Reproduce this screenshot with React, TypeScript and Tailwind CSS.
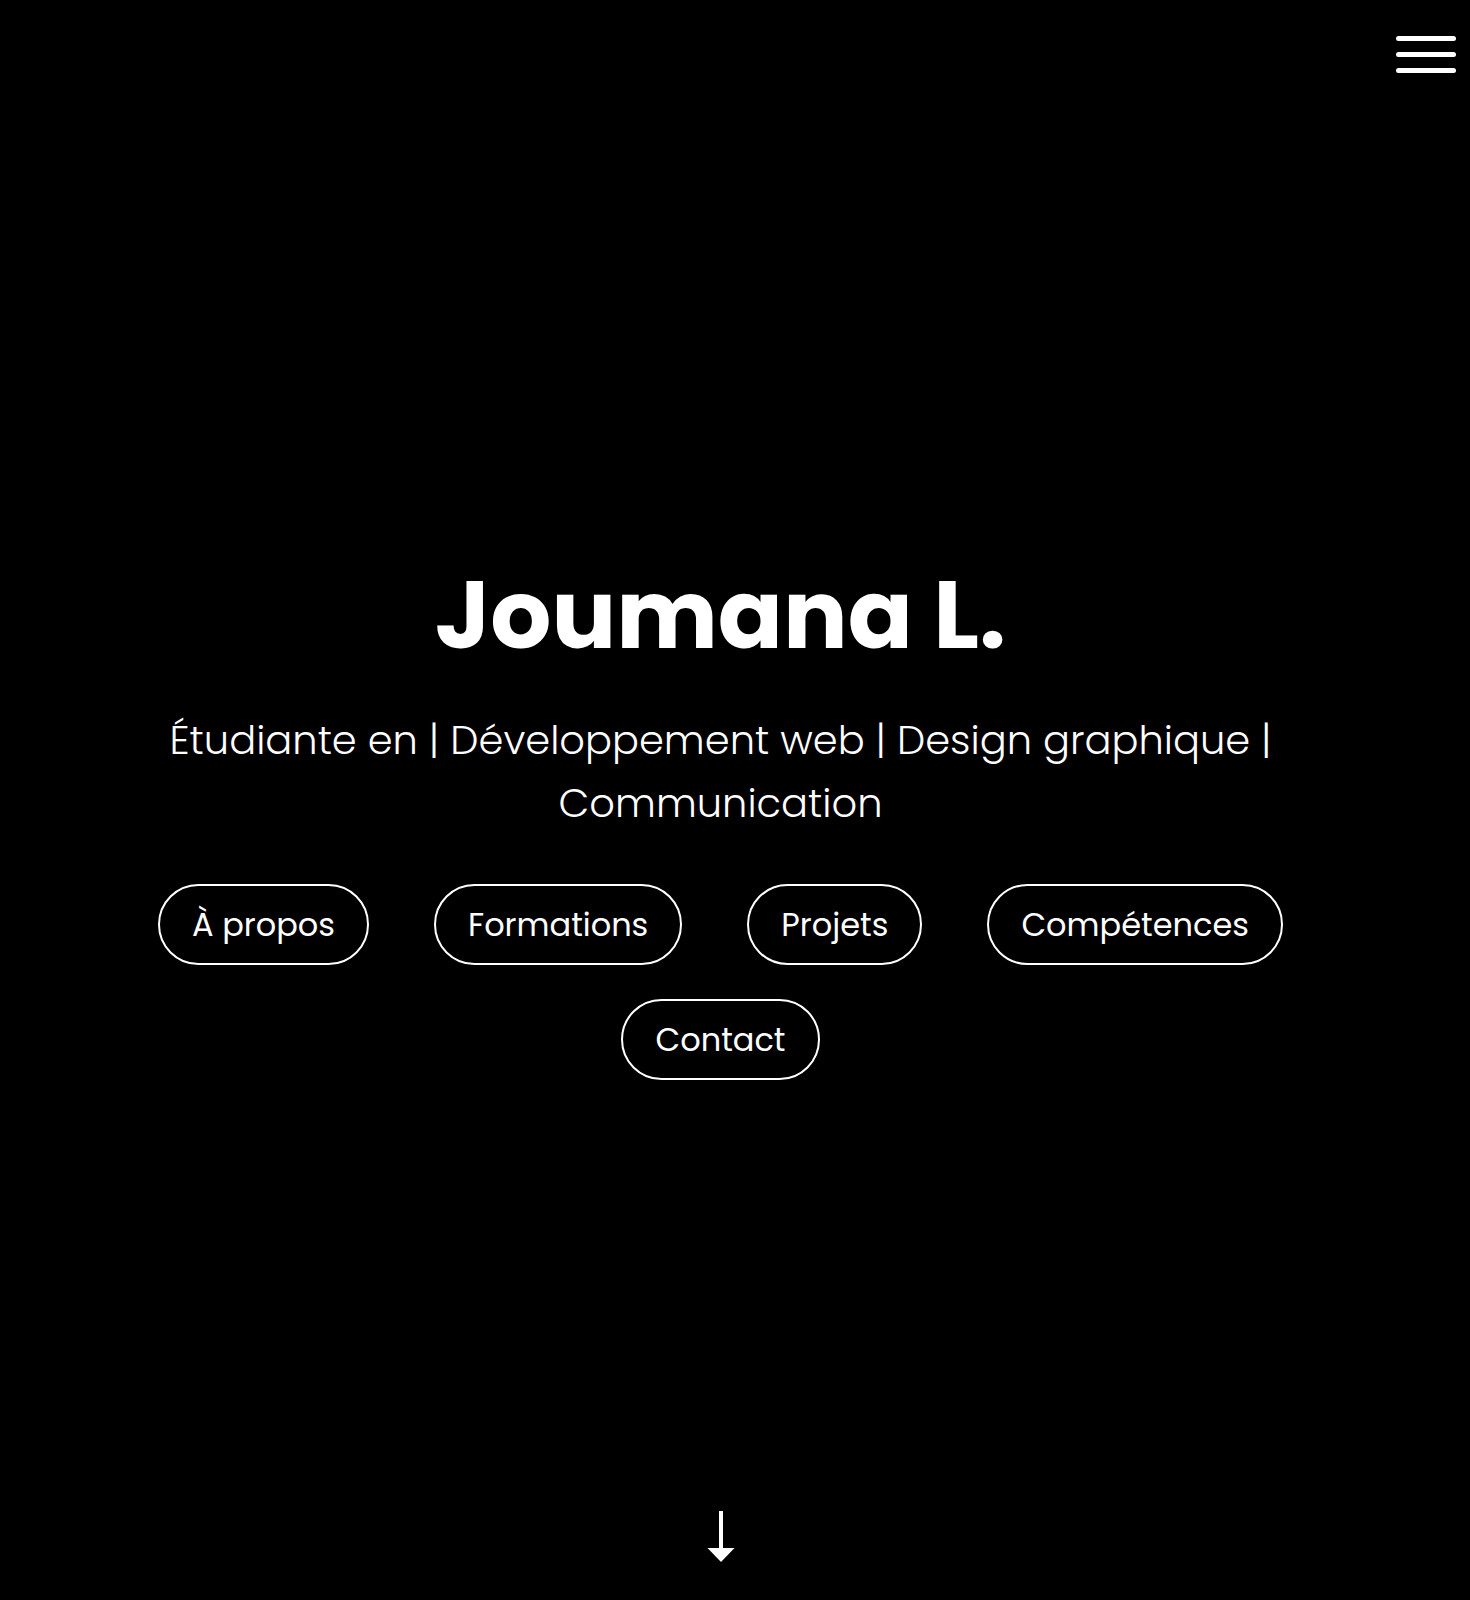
const links = ["À propos", "Formations", "Projets", "Compétences", "Contact"];

const App = () => {
  return (
    <div className="relative min-h-[1600px] bg-black text-white font-['Poppins','Inter',sans-serif]">
      {/* Menu button */}
      <button className="absolute top-[36px] right-[14px] flex flex-col gap-[11px]" aria-label="Menu">
        <span className="block h-[5px] w-[60px] rounded-full bg-white" />
        <span className="block h-[5px] w-[60px] rounded-full bg-white" />
        <span className="block h-[5px] w-[60px] rounded-full bg-white" />
      </button>

      <section className="flex h-[1600px] flex-col items-center pr-[29px] pt-[567px]">
        <h1 className="text-[96px] font-bold leading-none">Joumana L.</h1>

        <p className="mt-[46px] max-w-[1140px] text-center text-[40px] font-light leading-[63px]">
          Étudiante en | Développement web | Design graphique | Communication
        </p>

        {/* Nav pills */}
        <nav className="mt-[49px] flex max-w-[1160px] flex-wrap justify-center gap-x-[65px] gap-y-[34px]">
          {links.map((link) => (
            <a
              key={link}
              href="#"
              className="flex h-[81px] items-center rounded-full border-2 border-white px-[32px] text-[32px] font-normal"
            >
              {link}
            </a>
          ))}
        </nav>

        {/* Scroll arrow */}
        <div className="mt-auto pb-[37px]">
          <svg width="28" height="52" viewBox="0 0 28 52" fill="white">
            <rect x="12" y="0" width="4" height="38" />
            <polygon points="0.5,37 27.5,37 14,51" />
          </svg>
        </div>
      </section>
    </div>
  );
};

export default App;
